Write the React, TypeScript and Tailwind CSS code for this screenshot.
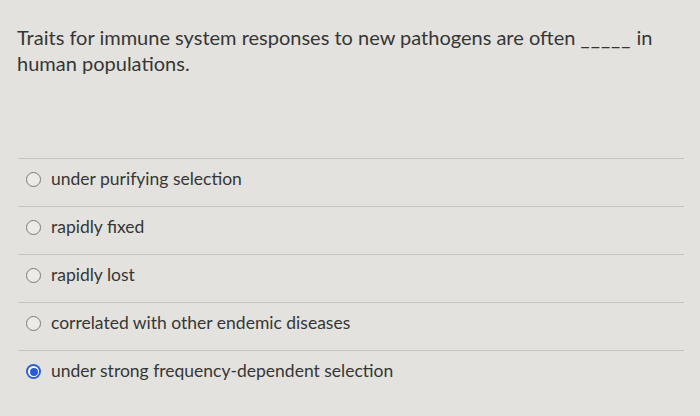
import React from 'react';

const options = [
  'under purifying selection',
  'rapidly fixed',
  'rapidly lost',
  'correlated with other endemic diseases',
  'under strong frequency-dependent selection',
];

const Radio: React.FC<{ checked?: boolean }> = ({ checked }) =>
  checked ? (
    <span className="w-[15px] h-[15px] rounded-full bg-[#2f5fd6] flex items-center justify-center shrink-0">
      <span className="w-[11px] h-[11px] rounded-full bg-white flex items-center justify-center">
        <span className="w-[8px] h-[8px] rounded-full bg-[#2a5ad8]" />
      </span>
    </span>
  ) : (
    <span className="w-[15px] h-[15px] rounded-full border-[1.5px] border-[#7a7a78] bg-[#ecebe7] shrink-0" />
  );

export default function App() {
  return (
    <div
      className="w-[700px] h-[416px] bg-[#e3e2de] text-[#363636] overflow-hidden"
      style={{ fontFamily: 'Lato, "Noto Sans", sans-serif' }}
    >
      <div className="pl-[17px] pr-4 pt-[24px] text-[20px] leading-[26px] h-[158px]">
        Traits for immune system responses to new pathogens are often{' '}
        <span className="tracking-[1px]">_____</span> in
        <br />
        human populations.
      </div>
      <div className="ml-[18px] mr-[16px]">
        {options.map((o, i) => (
          <div
            key={o}
            className="border-t border-[#c5c4c0] h-[48px] pb-[6px] flex items-center gap-[10px] pl-[8px] text-[17.5px]"
          >
            <Radio checked={i === 4} />
            <span className="-mt-[1px]">{o}</span>
          </div>
        ))}
      </div>
    </div>
  );
}
